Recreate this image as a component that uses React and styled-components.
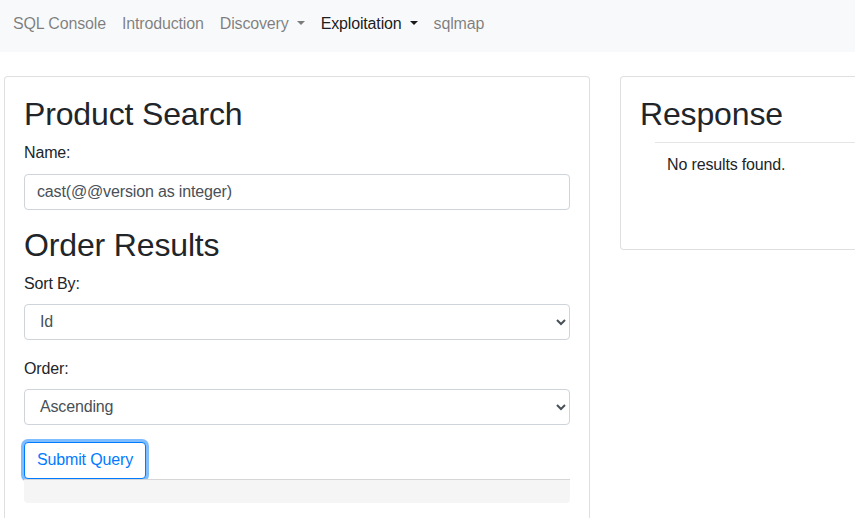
import React from 'react';
import styled, { createGlobalStyle } from "styled-components";

const GlobalStyle = createGlobalStyle`
  * { box-sizing: border-box; }
  body {
    margin: 0;
    font-family: "Liberation Sans", Arial, sans-serif;
    font-size: 16px;
    line-height: 1.5;
    letter-spacing: -0.15px;
    color: #212529;
    background: #fff;
    overflow: hidden;
  }
`;

const App = () => {
  return (
    <>
      <GlobalStyle />
      <Navbar>
        <NavLink>SQL Console</NavLink>
        <NavLink>Introduction</NavLink>
        <NavLink dropdown>Discovery</NavLink>
        <NavLink dropdown active>Exploitation</NavLink>
        <NavLink>sqlmap</NavLink>
      </Navbar>
      <Row>
        <Card width="586px">
          <Heading>Product Search</Heading>
          <FormGroup space="16px">
            <Label gap="9px">Name:</Label>
            <Input defaultValue="cast(@@version as integer)" />
          </FormGroup>
          <Heading gap="7px">Order Results</Heading>
          <FormGroup>
            <Label>Sort By:</Label>
            <Select defaultValue="id">
              <option value="id">Id</option>
              <option value="name">Name</option>
            </Select>
          </FormGroup>
          <FormGroup>
            <Label>Order:</Label>
            <Select defaultValue="asc">
              <option value="asc">Ascending</option>
              <option value="desc">Descending</option>
            </Select>
          </FormGroup>
          <SubmitBtn>Submit Query</SubmitBtn>
          <Output />
        </Card>
        <Card width="300px">
          <Heading>Response</Heading>
          <Rule />
          <Results>No results found.</Results>
        </Card>
      </Row>
    </>
  );
};

const Navbar = styled.nav`
  height: 52px;
  background-color: #f8f9fa;
  display: flex;
  align-items: flex-start;
  padding: 12px 5px 0;
`;
const NavLink = styled.a`
  padding: 0 8px;
  line-height: 24px;
  color: ${p => (p.active ? "rgba(0,0,0,.9)" : "rgba(0,0,0,.5)")};
  white-space: nowrap;
  &::after {
    content: ${p => (p.dropdown ? "''" : "none")};
    display: inline-block;
    margin-left: 8px;
    vertical-align: 0.255em;
    border-top: 0.3em solid;
    border-right: 0.3em solid transparent;
    border-left: 0.3em solid transparent;
  }
`;
const Row = styled.div`
  display: flex;
  gap: 30px;
  padding: 24px 0 0 4px;
  align-items: flex-start;
`;
const Card = styled.div`
  width: ${p => p.width};
  flex-shrink: 0;
  border: 1px solid rgba(0,0,0,.125);
  border-radius: 4px;
  padding: 18px 19px 20px 19px;
  background: #fff;
`;
const Heading = styled.h2`
  margin: 0 0 ${p => p.gap || "8px"};
  font-size: 32px;
  font-weight: 500;
  line-height: 1.2;
`;
const FormGroup = styled.div`
  margin-bottom: ${p => p.space || "17px"};
`;
const Label = styled.label`
  display: block;
  margin-bottom: ${p => p.gap || "8px"};
`;
const Input = styled.input`
  display: block;
  width: 100%;
  height: 36px;
  padding: 6px 12px;
  font: inherit;
  letter-spacing: inherit;
  color: #495057;
  border: 1px solid #ced4da;
  border-radius: 4px;
  background: #fff;
  outline: none;
`;
const Select = styled.select`
  display: block;
  width: 100%;
  height: 36px;
  padding: 6px 8px 6px 11px;
  font: inherit;
  letter-spacing: inherit;
  color: #495057;
  border: 1px solid #ced4da;
  border-radius: 4px;
  background: #fff;
  outline: none;
`;
const SubmitBtn = styled.button`
  display: block;
  height: 37px;
  padding: 0 12px;
  font: inherit;
  letter-spacing: inherit;
  color: #007bff;
  background: #fff;
  border: 1px solid #007bff;
  border-radius: 4px;
  box-shadow: 0 0 0 3px rgba(0,123,255,.5);
  cursor: pointer;
`;
const Output = styled.div`
  height: 24px;
  background: #f5f5f5;
  border-top: 1px solid #d6d6d6;
  border-radius: 0 0 4px 4px;
  margin-bottom: 20px;
`;
const Rule = styled.hr`
  margin: 9px 0 0 15px;
  border: 0;
  border-top: 1px solid rgba(0,0,0,.1);
`;
const Results = styled.div`
  padding: 10px 0 0 27px;
  height: 86px;
`;

export default App;
